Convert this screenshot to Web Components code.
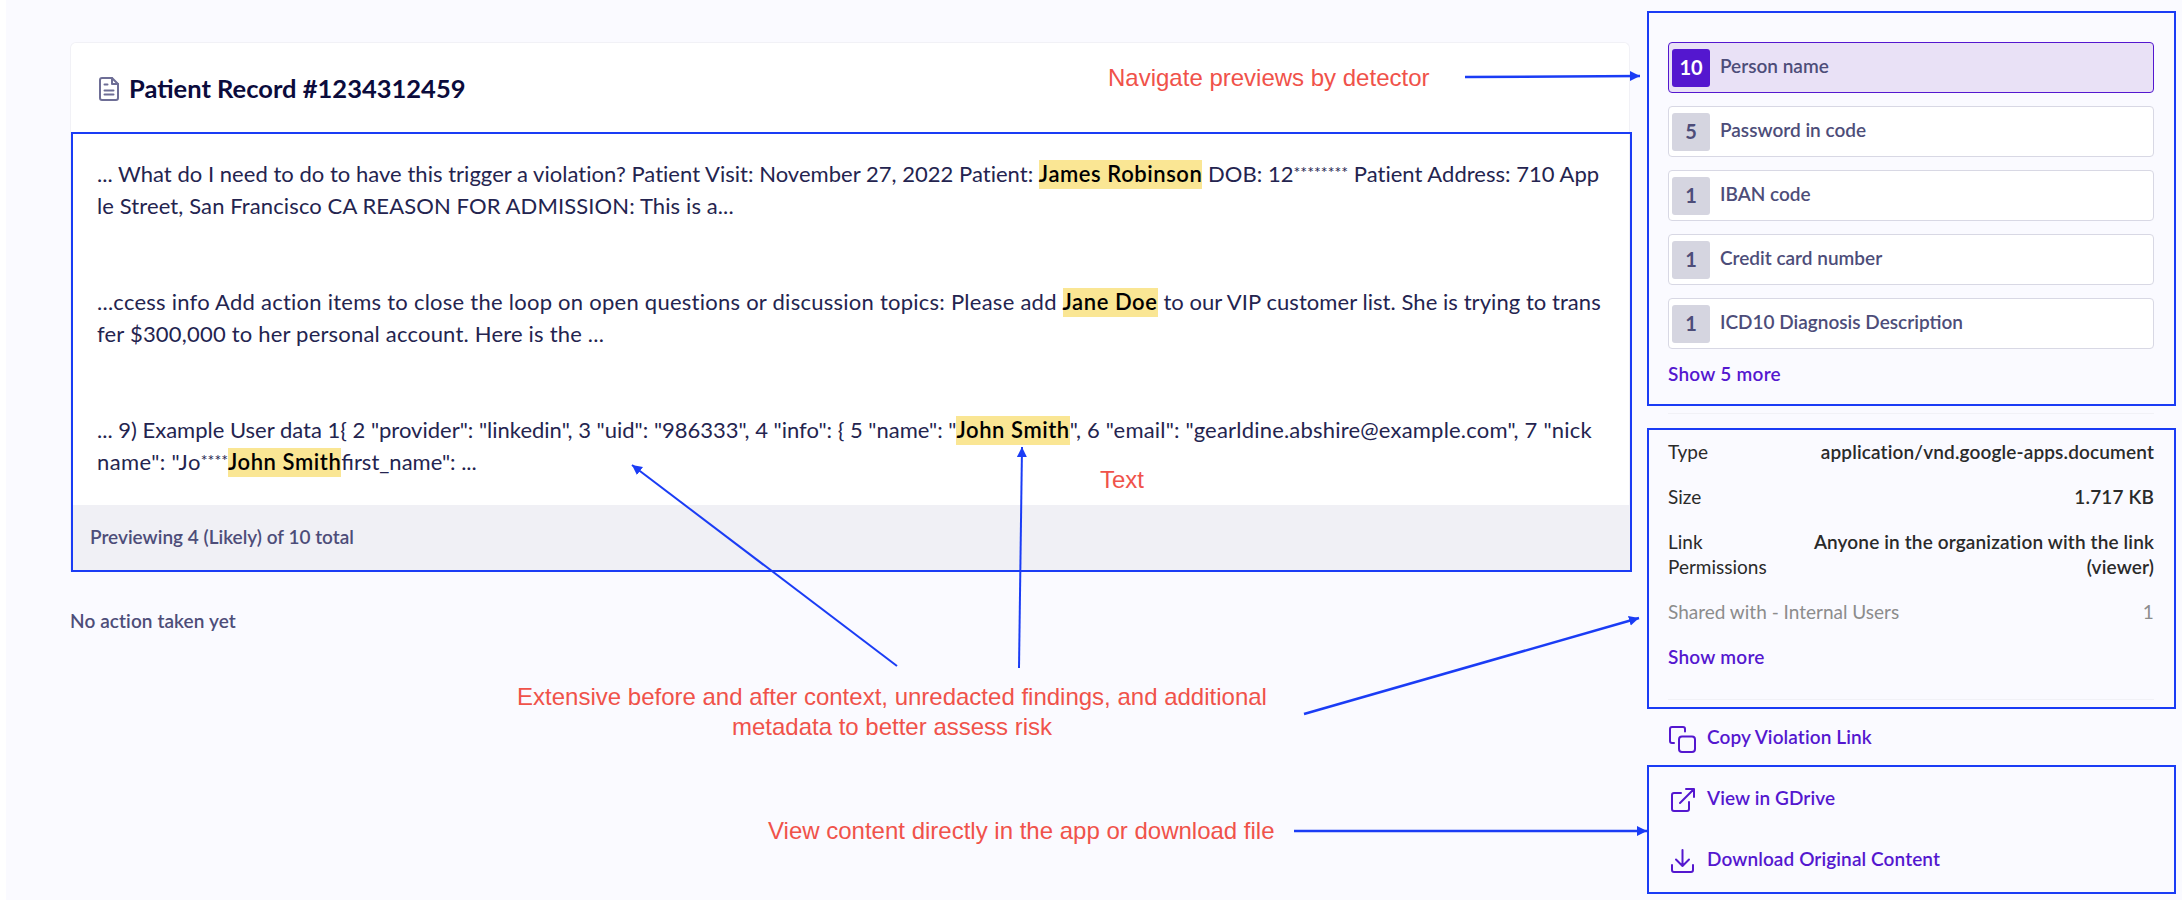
<!DOCTYPE html>
<html>
<head>
<meta charset="utf-8">
<title>Patient Record</title>
<style>
  html, body { margin: 0; height: 100%; }
  body {
    background: #fff;
    font-family: Lato, "Noto Sans", sans-serif;
    overflow: hidden;
  }
</style>
</head>
<body>

<review-page>
  <div slot="main">
    <record-card heading="Patient Record #1234312459" footer="Previewing 4 (Likely) of 10 total">
      <snippet-text style="letter-spacing:0.030px">... What do I need to do to have this trigger a violation? Patient Visit: November 27, 2022 Patient: <mark>James Robinson</mark> DOB: 12<small>********</small> Patient Address: 710 App<br><span style="letter-spacing:0.110px">le Street, San Francisco CA REASON FOR ADMISSION: This is a...</span></snippet-text>
      <snippet-text style="letter-spacing:0.250px">...ccess info Add action items to close the loop on open questions or discussion topics: Please add <mark>Jane Doe</mark> <span style="letter-spacing:0.060px">to our VIP customer list. She is trying to trans</span><br><span style="letter-spacing:0.200px">fer $300,000 to her personal account. Here is the ...</span></snippet-text>
      <snippet-text>... 9) Example User data 1{ 2 "provider": "linkedin", 3 "uid": "986333", 4 "info": { 5 "name": "<mark>John Smith</mark><span style="letter-spacing:0.200px">", 6 "email": "gearldine.abshire@example.com", 7 "nick</span><br><span style="letter-spacing:0.400px">name": "Jo</span><small>****</small><mark>John Smith</mark>first_name": ...</snippet-text>
    </record-card>
    <status-note>No action taken yet</status-note>
  </div>

  <div slot="side">
    <callout-frame style="margin-top:11px;--pad:29px 20px 18px 19px">
      <detector-item count="10" active>Person name</detector-item>
      <detector-item count="5">Password in code</detector-item>
      <detector-item count="1">IBAN code</detector-item>
      <detector-item count="1">Credit card number</detector-item>
      <detector-item count="1">ICD10 Diagnosis Description</detector-item>
      <more-link style="margin-top:13px">Show 5 more</more-link>
    </callout-frame>
    <side-rule style="margin:7px 22px 14px 21px"></side-rule>
    <callout-frame style="--pad:9px 20px 7px 19px">
      <meta-row label="Type">application/vnd.google-apps.document</meta-row>
      <meta-row label="Size">1.717 KB</meta-row>
      <meta-row label="Link Permissions" narrow>Anyone in the organization with the link (viewer)</meta-row>
      <meta-row label="Shared with - Internal Users" muted>1</meta-row>
      <more-link style="margin-top:21px">Show more</more-link>
      <side-rule style="margin-top:30px"></side-rule>
    </callout-frame>
    <action-link icon="copy" style="margin:14px 0 12px 21px">Copy Violation Link</action-link>
    <callout-frame style="--pad:17px 20px 17px 19px">
      <action-link icon="open" style="margin-bottom:31px">View in GDrive</action-link>
      <action-link icon="download">Download Original Content</action-link>
    </callout-frame>
  </div>
</review-page>

<annot-layer>
  <annot-label x="1108" y="78">Navigate previews by detector</annot-label>
  <annot-label x="1100" y="480">Text</annot-label>
  <annot-label x="892" y="712" center>Extensive before and after context, unredacted findings, and additional<br>metadata to better assess risk</annot-label>
  <annot-label x="768" y="831">View content directly in the app or download file</annot-label>
</annot-layer>

<script>
const docIcon = `<svg width="20" height="24" viewBox="0 0 20 24" fill="none" stroke="#6e6e96" stroke-width="2" stroke-linecap="round" stroke-linejoin="round">
  <path d="M3 1h10l6 6v14a2 2 0 0 1-2 2H3a2 2 0 0 1-2-2V3a2 2 0 0 1 2-2z"/>
  <path d="M13 1v6h6M5.500 7.500h3M5.500 13.500h9M5.500 17.500h9"/>
</svg>`;

const actionIcons = {
  copy: `<rect x="11" y="11.500" width="16" height="15.500" rx="3"/><path d="M6 18H4a2 2 0 0 1-2-2V4a2 2 0 0 1 2-2h11a2 2 0 0 1 2 2v2.500"/>`,
  open: `<path d="M13 7H6a2 2 0 0 0-2 2v14a2 2 0 0 0 2 2h13a2 2 0 0 0 2-2v-7M18 3h8v8M26 3L12 17"/>`,
  download: `<path d="M4 18v5a2 2 0 0 0 2 2h17a2 2 0 0 0 2-2v-5M14.500 3v16M8 12.500l6.500 6.500 6.500-6.500"/>`
};

class ReviewPage extends HTMLElement {
  constructor() {
    super();
    this.attachShadow({ mode: 'open' });
  }

  connectedCallback() {
    this.shadowRoot.innerHTML = `
      <style>
        :host {
          display: grid;
          grid-template-columns: 1561px 529px;
          column-gap: 16px;
          margin-left: 6px;
          padding-left: 64px;
          height: 900px;
          box-sizing: border-box;
          background: #fafaff;
        }
        .main { padding-top: 42px; }
        .side { display: flex; flex-direction: column; }
        ::slotted(div) { display: contents; }
      </style>
      <div class="main"><slot name="main"></slot></div>
      <div class="side"><slot name="side"></slot></div>
    `;
  }
}

class RecordCard extends HTMLElement {
  constructor() {
    super();
    this.attachShadow({ mode: 'open' });
  }

  connectedCallback() {
    this.shadowRoot.innerHTML = `
      <style>
        :host {
          display: block;
          background: #fff;
          border: 1px solid #f1f1f6;
          border-bottom: 0;
          border-radius: 6px 6px 0 0;
          width: 1558px;
        }
        header {
          display: flex;
          align-items: center;
          gap: 10px;
          height: 89px;
          padding-left: 28px;
          box-sizing: border-box;
        }
        h1 {
          margin: 0;
          font-size: 25.500px;
          font-weight: 700;
          color: #0b0b3c;
        }
        svg { flex: none; margin-top: 2px; }
        .frame {
          border: 2px solid #1a3cf5;
          margin-right: -3px;
        }
        .text { padding: 24px 24px 27px; display: grid; row-gap: 64px; }
        footer {
          background: #f0f0f5;
          height: 65px;
          display: flex;
          align-items: center;
          padding: 0 0 2px 17px;
          box-sizing: border-box;
          font-size: 19px;
          font-weight: 600;
          color: #4d4d79;
        }
      </style>
      <header>${docIcon}<h1>${this.getAttribute('heading')}</h1></header>
      <div class="frame">
        <div class="text"><slot></slot></div>
        <footer>${this.getAttribute('footer')}</footer>
      </div>
    `;
  }
}

class SnippetText extends HTMLElement {
  constructor() {
    super();
    this.attachShadow({ mode: 'open' });
  }

  connectedCallback() {
    this.shadowRoot.innerHTML = `
      <style>
        :host {
          display: block;
          font-size: 22px;
          line-height: 32px;
          color: #24244f;
          white-space: nowrap;
        }
        ::slotted(mark) {
          background: #fae694;
          color: #000;
          font-weight: 600;
          padding: 0 0 2px;
          letter-spacing: 0.570px;
        }
        ::slotted(small) {
          font-size: 16px;
          line-height: 0;
          vertical-align: 4px;
        }
      </style>
      <slot></slot>
    `;
  }
}

class StatusNote extends HTMLElement {
  constructor() {
    super();
    this.attachShadow({ mode: 'open' });
  }

  connectedCallback() {
    this.shadowRoot.innerHTML = `
      <style>
        :host {
          display: block;
          margin-top: 37px;
          font-size: 19px;
          line-height: 24px;
          font-weight: 600;
          letter-spacing: 0.100px;
          color: #4d4d79;
        }
      </style>
      <slot></slot>
    `;
  }
}

class CalloutFrame extends HTMLElement {
  constructor() {
    super();
    this.attachShadow({ mode: 'open' });
  }

  connectedCallback() {
    this.shadowRoot.innerHTML = `
      <style>
        :host {
          display: block;
          border: 2px solid #1a3cf5;
          padding: var(--pad, 0);
        }
      </style>
      <slot></slot>
    `;
  }
}

class DetectorItem extends HTMLElement {
  constructor() {
    super();
    this.attachShadow({ mode: 'open' });
  }

  connectedCallback() {
    this.shadowRoot.innerHTML = `
      <style>
        :host {
          display: flex;
          align-items: center;
          gap: 10px;
          height: 51px;
          box-sizing: border-box;
          padding-left: 3px;
          margin-bottom: 13px;
          background: #fff;
          border: 1px solid #d8d8e4;
          border-radius: 4px;
          font-size: 19px;
          font-weight: 600;
          color: #4d4d79;
        }
        :host(:last-of-type) { margin-bottom: 0; }
        :host([active]) { background: #e9e1f6; border-color: #5417cf; }
        .count {
          width: 38px;
          height: 38px;
          display: grid;
          place-items: center;
          padding-bottom: 2px;
          box-sizing: border-box;
          background: #d5d5e0;
          border-radius: 3px;
          font-size: 20px;
          font-weight: 700;
        }
        :host([active]) .count { background: #5417cf; color: #fff; }
        .name { margin-top: -4px; }
      </style>
      <span class="count">${this.getAttribute('count')}</span>
      <span class="name"><slot></slot></span>
    `;
  }
}

class MoreLink extends HTMLElement {
  constructor() {
    super();
    this.attachShadow({ mode: 'open' });
  }

  connectedCallback() {
    this.shadowRoot.innerHTML = `
      <style>
        :host {
          display: block;
          font-size: 19px;
          line-height: 24px;
          font-weight: 600;
          letter-spacing: 0.250px;
          color: #5417cf;
        }
      </style>
      <slot></slot>
    `;
  }
}

class MetaRow extends HTMLElement {
  constructor() {
    super();
    this.attachShadow({ mode: 'open' });
  }

  connectedCallback() {
    this.shadowRoot.innerHTML = `
      <style>
        :host {
          display: flex;
          justify-content: space-between;
          gap: 20px;
          font-size: 19px;
          line-height: 25px;
          margin-bottom: 20px;
          color: #2a2a2a;
        }
        :host([muted]) { margin-bottom: 0; color: #8c8c8c; }
        .label { flex: none; }
        :host([narrow]) .label { width: 110px; }
        .value { text-align: right; font-weight: 600; letter-spacing: 0.140px; }
        :host([muted]) .value { font-weight: 400; }
      </style>
      <span class="label">${this.getAttribute('label')}</span>
      <span class="value"><slot></slot></span>
    `;
  }
}

class SideRule extends HTMLElement {
  constructor() {
    super();
    this.attachShadow({ mode: 'open' });
  }

  connectedCallback() {
    this.shadowRoot.innerHTML = `
      <style>
        :host { display: block; height: 1px; background: #f1f1f6; }
      </style>
    `;
  }
}

class ActionLink extends HTMLElement {
  constructor() {
    super();
    this.attachShadow({ mode: 'open' });
  }

  connectedCallback() {
    const icon = actionIcons[this.getAttribute('icon')];
    this.shadowRoot.innerHTML = `
      <style>
        :host {
          display: flex;
          gap: 11px;
          height: 30px;
          font-size: 19px;
          line-height: 27px;
          font-weight: 600;
          letter-spacing: 0.100px;
          color: #5417cf;
        }
        svg { flex: none; margin-top: 2px; }
      </style>
      <svg width="28" height="28" viewBox="0 0 28 28" fill="none" stroke="currentColor" stroke-width="2" stroke-linecap="round" stroke-linejoin="round">${icon}</svg>
      <slot></slot>
    `;
  }
}

// annotations drawn over the screenshot, free placement on purpose
class AnnotLayer extends HTMLElement {
  constructor() {
    super();
    this.attachShadow({ mode: 'open' });
  }

  connectedCallback() {
    const arrow = (x1, y1, x2, y2, w) =>
      `<line x1="${x1}" y1="${y1}" x2="${x2}" y2="${y2}" stroke="#1a3cf5" stroke-width="${w}" marker-end="url(#head)"/>`;
    this.shadowRoot.innerHTML = `
      <style>
        :host { position: absolute; inset: 0; pointer-events: none; }
        svg { position: absolute; inset: 0; }
      </style>
      <svg width="2182" height="900" viewBox="0 0 2182 900">
        <defs>
          <marker id="head" markerUnits="userSpaceOnUse" markerWidth="12" markerHeight="12" refX="10" refY="5" orient="auto">
            <path d="M0 0L10 5L0 10z" fill="#1a3cf5"/>
          </marker>
        </defs>
        ${arrow(1465, 77, 1640, 76, 2.5)}
        ${arrow(897, 666, 632, 465, 2)}
        ${arrow(1019, 668, 1022, 447, 2)}
        ${arrow(1304, 714, 1639, 618, 2.5)}
        ${arrow(1294, 831, 1647, 831, 2.5)}
      </svg>
      <slot></slot>
    `;
  }
}

class AnnotLabel extends HTMLElement {
  constructor() {
    super();
    this.attachShadow({ mode: 'open' });
  }

  connectedCallback() {
    const x = this.getAttribute('x');
    const y = this.getAttribute('y');
    const center = this.hasAttribute('center');
    this.shadowRoot.innerHTML = `
      <style>
        :host {
          position: absolute;
          left: ${x}px;
          top: ${y}px;
          transform: translate(${center ? '-50%' : '0'}, -50%);
          font-family: "Liberation Sans", Arial, sans-serif;
          font-size: 24px;
          line-height: 30px;
          color: #f0524a;
          white-space: nowrap;
          text-align: ${center ? 'center' : 'left'};
        }
      </style>
      <slot></slot>
    `;
  }
}

customElements.define('review-page', ReviewPage);
customElements.define('record-card', RecordCard);
customElements.define('snippet-text', SnippetText);
customElements.define('status-note', StatusNote);
customElements.define('callout-frame', CalloutFrame);
customElements.define('detector-item', DetectorItem);
customElements.define('more-link', MoreLink);
customElements.define('meta-row', MetaRow);
customElements.define('side-rule', SideRule);
customElements.define('action-link', ActionLink);
customElements.define('annot-layer', AnnotLayer);
customElements.define('annot-label', AnnotLabel);
</script>
</body>
</html>
